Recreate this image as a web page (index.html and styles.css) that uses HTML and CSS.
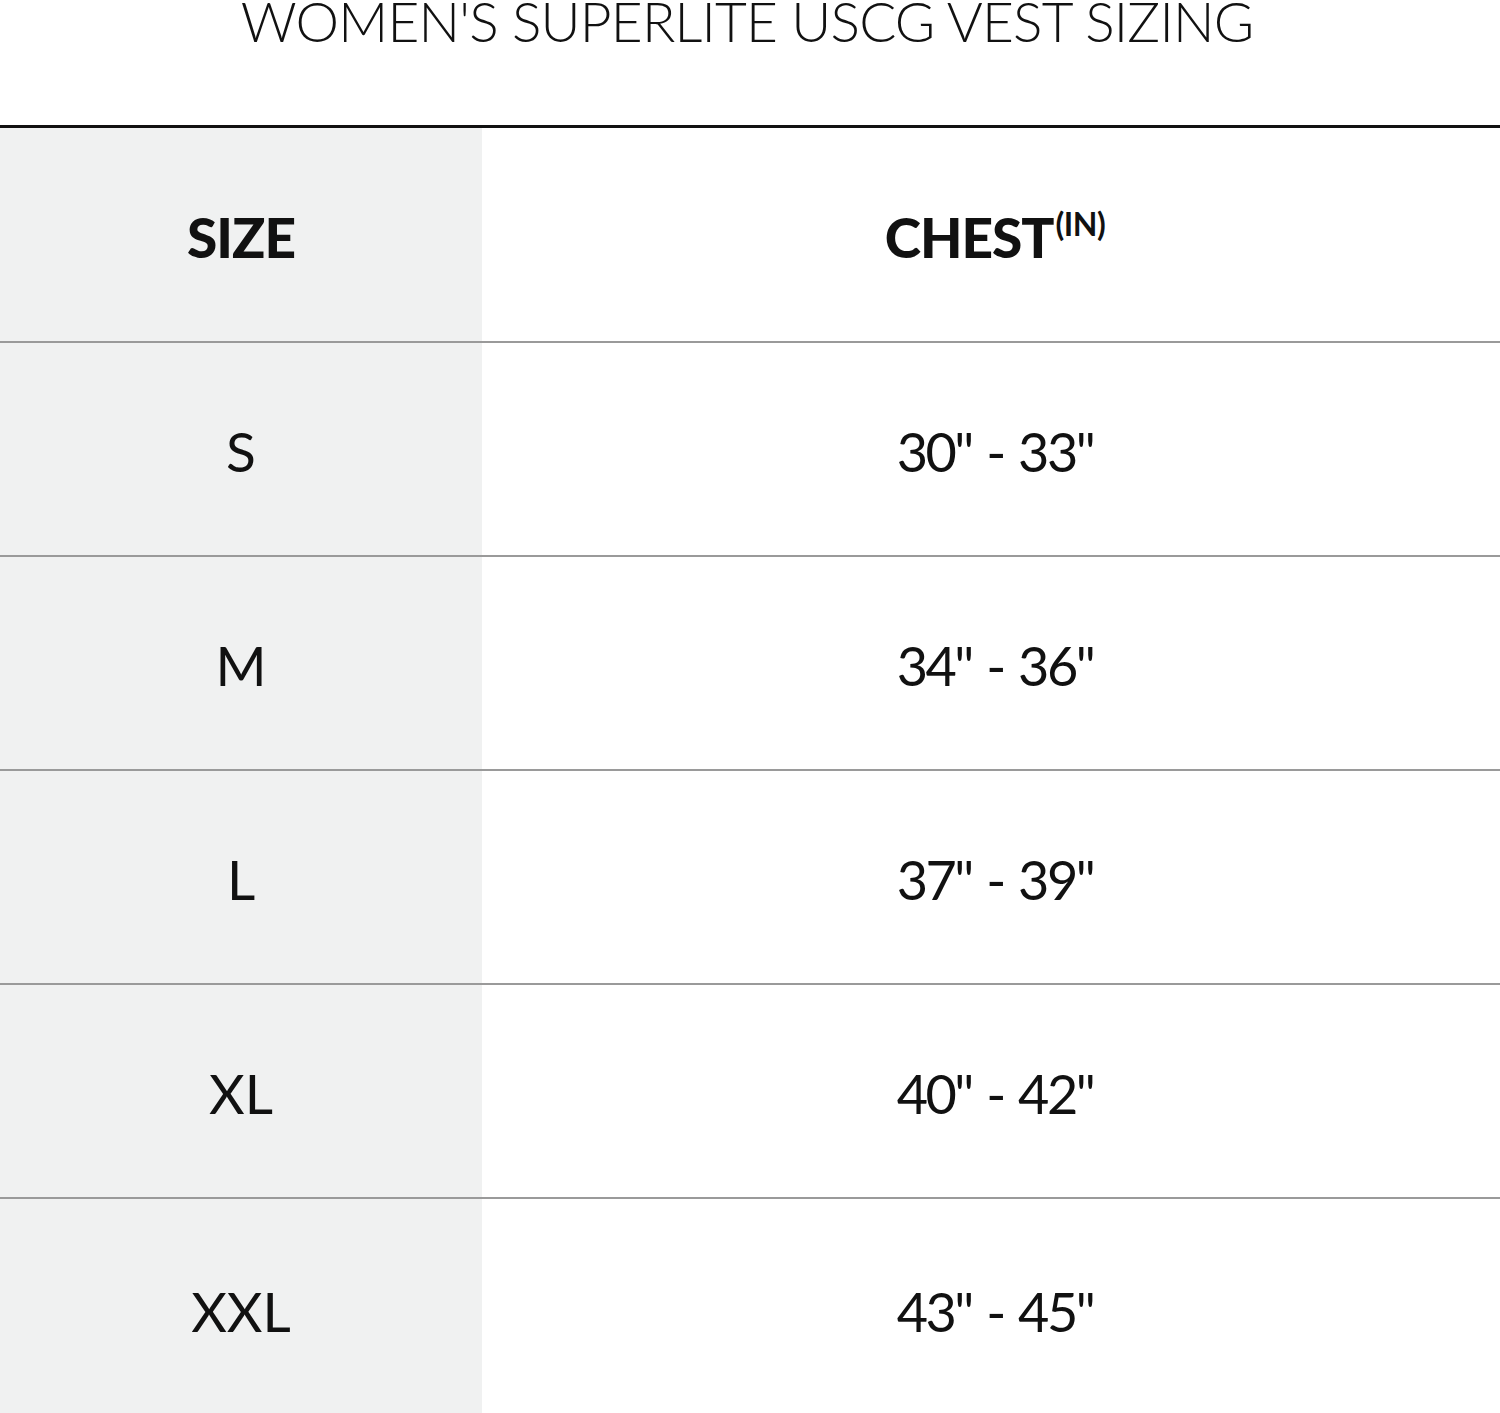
FILE: index.html
```html
<!DOCTYPE html>
<html>
<head>
<meta charset="utf-8">
<link rel="stylesheet" href="styles.css">
</head>
<body>
<div class="page">
  <h1 class="title">WOMEN'S SUPERLITE USCG VEST SIZING</h1>
  <div class="chart">
    <div class="row head">
      <div class="cell size">SIZE</div>
      <div class="cell chest">CHEST<sup>(IN)</sup></div>
    </div>
    <div class="row">
      <div class="cell size">S</div>
      <div class="cell chest">30" - 33"</div>
    </div>
    <div class="row">
      <div class="cell size">M</div>
      <div class="cell chest">34" - 36"</div>
    </div>
    <div class="row">
      <div class="cell size">L</div>
      <div class="cell chest">37" - 39"</div>
    </div>
    <div class="row">
      <div class="cell size">XL</div>
      <div class="cell chest">40" - 42"</div>
    </div>
    <div class="row last">
      <div class="cell size">XXL</div>
      <div class="cell chest">43" - 45"</div>
    </div>
  </div>
</div>
</body>
</html>
```
FILE: styles.css
```css
html, body {
  margin: 0;
  padding: 0;
  background: #ffffff;
}
body {
  font-family: "Lato", "Liberation Sans", sans-serif;
  color: #111111;
  width: 1500px;
  height: 1413px;
  overflow: hidden;
}
.page {
  display: flex;
  flex-direction: column;
}
.title {
  margin: 0;
  height: 125px;
  font-size: 55px;
  font-weight: 300;
  line-height: 42px;
  text-align: center;
  letter-spacing: -0.8px;
  color: #111;
  border-bottom: 3px solid #111;
  padding-right: 6px;
}
.chart {
  display: flex;
  flex-direction: column;
}
.row {
  display: grid;
  grid-template-columns: 482px 1fr;
  height: 212px;
  border-top: 2px solid #9a9a9a;
}
.row.head {
  border-top: none;
  height: 213px;
}
.row.last {
  height: 220px;
}
.cell {
  display: flex;
  align-items: center;
  justify-content: center;
  font-size: 55px;
  font-weight: 400;
  padding-top: 4px;
}
.size {
  background: #f0f1f1;
}
.chest {
  background: #ffffff;
  padding-left: 8px;
  font-size: 54px;
  letter-spacing: -2.5px;
  word-spacing: 3px;
}
.head .cell {
  font-weight: 900;
  font-size: 55px;
  letter-spacing: -1px;
  word-spacing: 0;
}
.head sup {
  font-size: 32px;
  font-weight: 700;
  letter-spacing: -0.5px;
  align-self: flex-start;
  margin-top: 76px;
  margin-left: 2px;
  line-height: 1;
}
```
